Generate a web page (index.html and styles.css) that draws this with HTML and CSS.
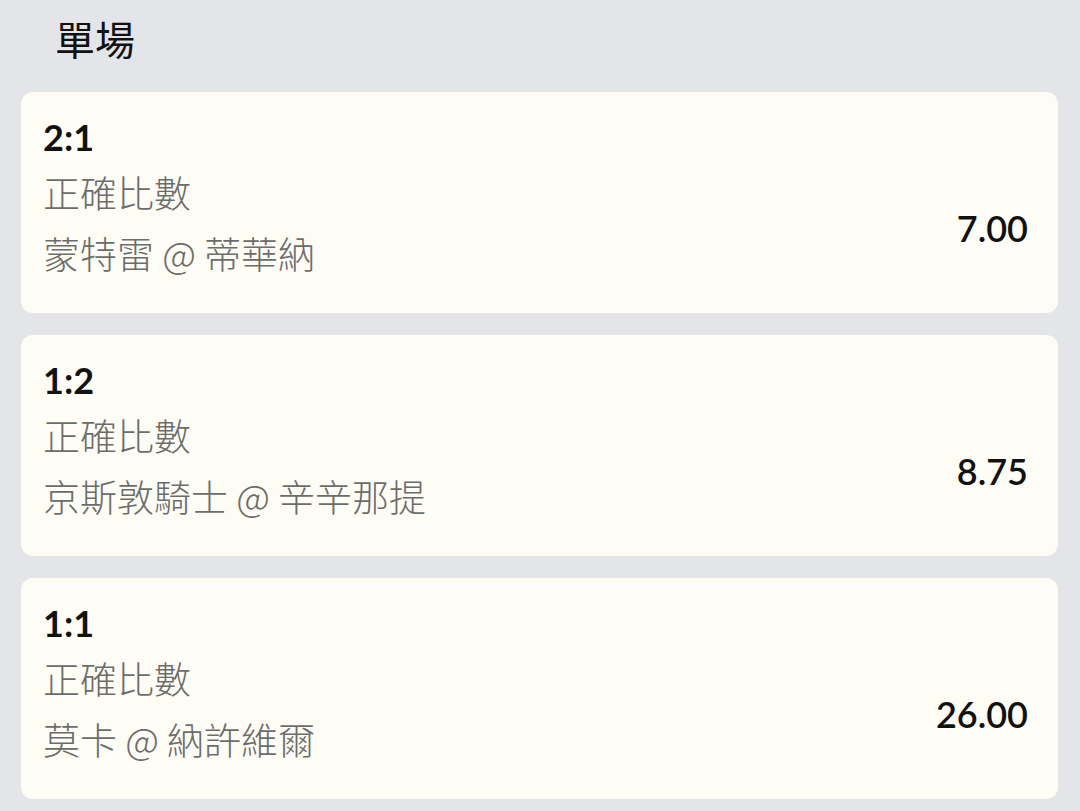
FILE: index.html
```html
<!DOCTYPE html>
<html lang="zh-Hant">
<head>
<meta charset="utf-8">
<link rel="stylesheet" href="styles.css">
</head>
<body>
<div class="page">
  <h1 class="title">單場</h1>
  <div class="list">
    <div class="card">
      <div class="info">
        <div class="score">2:1</div>
        <div class="market">正確比數</div>
        <div class="match">蒙特雷 @ 蒂華納</div>
      </div>
      <div class="odds">7.00</div>
    </div>
    <div class="card">
      <div class="info">
        <div class="score">1:2</div>
        <div class="market">正確比數</div>
        <div class="match">京斯敦騎士 @ 辛辛那提</div>
      </div>
      <div class="odds">8.75</div>
    </div>
    <div class="card">
      <div class="info">
        <div class="score">1:1</div>
        <div class="market">正確比數</div>
        <div class="match">莫卡 @ 納許維爾</div>
      </div>
      <div class="odds">26.00</div>
    </div>
  </div>
</div>
</body>
</html>
```

FILE: styles.css
```css
html, body {
  margin: 0;
  padding: 0;
  background: #e4e5e8;
}
body {
  font-family: Lato, "Noto Sans CJK TC", sans-serif;
  width: 1080px;
  height: 811px;
  overflow: hidden;
}
.page {
  padding: 0 22px 0 21px;
}
.title {
  margin: 0;
  padding: 12px 0 0 34px;
  height: 78px;
  box-sizing: border-box;
  font-family: "Noto Sans CJK TC", sans-serif;
  font-weight: 400;
  font-size: 40px;
  line-height: 52px;
  color: #111;
}
.list {
  display: flex;
  flex-direction: column;
  gap: 22px;
  padding-top: 14px;
}
.card {
  background: #fefdf5;
  border-radius: 12px;
  height: 221px;
  box-sizing: border-box;
  padding: 20px 30px 0 22px;
  display: flex;
  justify-content: space-between;
  align-items: flex-start;
}
.info {
  display: flex;
  flex-direction: column;
}
.score {
  font-family: Lato, sans-serif;
  font-weight: 700;
  font-size: 36px;
  line-height: 50px;
  color: #111;
}
.market, .match {
  font-family: "Noto Sans CJK TC", sans-serif;
  font-weight: 300;
  font-size: 37px;
  line-height: 61px;
  color: #6c6c6c;
}
.odds {
  align-self: center;
  margin-top: 30px;
  font-family: Lato, sans-serif;
  font-weight: 600;
  font-size: 36px;
  color: #111;
}
```
